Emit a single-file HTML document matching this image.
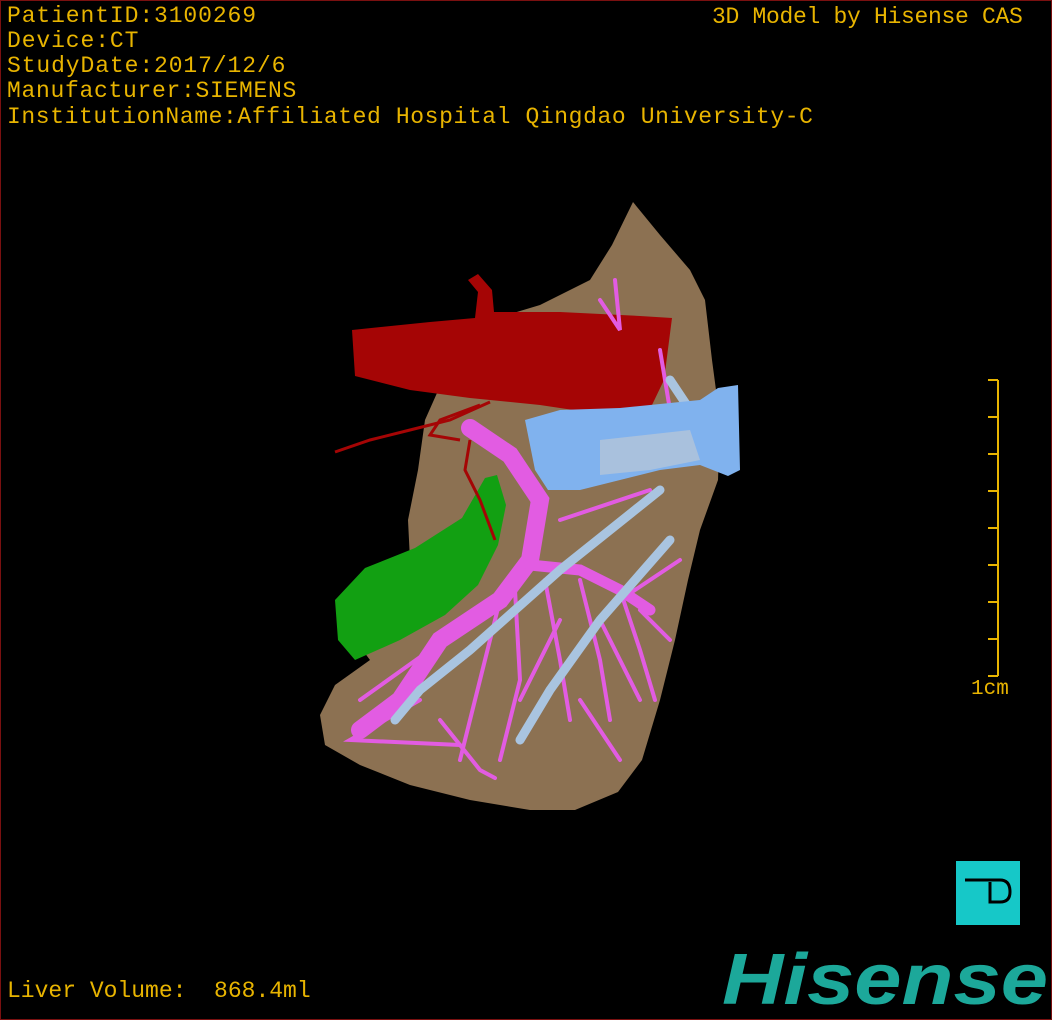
<!DOCTYPE html>
<html><head><style>
html,body{margin:0;padding:0;background:#000}
#f{position:relative;width:1050px;height:1018px;border:1px solid #7a1010;background:#000;overflow:hidden}
.t{position:absolute;left:6px;color:#e8b400;font-family:"Liberation Mono",monospace;font-size:23px;line-height:25px;white-space:pre}
</style></head><body><div id="f">
<div class="t" style="top:3px;letter-spacing:0.9px">PatientID:3100269</div>
<div class="t" style="top:28px;letter-spacing:0.9px">Device:CT</div>
<div class="t" style="top:53px;letter-spacing:0.9px">StudyDate:2017/12/6</div>
<div class="t" style="top:78px;letter-spacing:0.7px">Manufacturer:SIEMENS</div>
<div class="t" style="top:104px;letter-spacing:0.6px">InstitutionName:Affiliated Hospital Qingdao University-C</div>
<div class="t" style="left:711px;top:4px;letter-spacing:-0.3px">3D Model by Hisense CAS</div>
<div class="t" style="top:978px">Liver Volume:  868.4ml</div>
<div class="t" style="left:970px;top:676px;font-size:21px">1cm</div>
<svg width="1052" height="1020" style="position:absolute;left:-1px;top:-1px">
<g stroke="#e8b400" stroke-width="2">
<line x1="998" y1="380" x2="998" y2="676"/>
<line x1="988" y1="380" x2="998" y2="380"/><line x1="988" y1="417" x2="998" y2="417"/><line x1="988" y1="454" x2="998" y2="454"/><line x1="988" y1="491" x2="998" y2="491"/><line x1="988" y1="528" x2="998" y2="528"/><line x1="988" y1="565" x2="998" y2="565"/><line x1="988" y1="602" x2="998" y2="602"/><line x1="988" y1="639" x2="998" y2="639"/><line x1="988" y1="676" x2="998" y2="676"/>
</g>
<path d="M633,202 L660,235 L690,270 L705,300 L712,360 L720,420 L718,480 L700,530 L688,580 L675,640 L660,700 L642,760 L618,792 L575,810 L530,810 L470,800 L410,785 L360,765 L325,745 L320,715 L335,685 L370,660 L340,620 L345,595 L410,560 L408,520 L418,470 L425,420 L445,375 L490,320 L540,305 L590,280 L612,245 Z" fill="#8c7152"/>
<path d="M335,600 L365,568 L415,548 L462,518 L485,478 L497,475 L506,505 L498,545 L478,585 L445,615 L400,640 L355,660 L338,640 Z" fill="#12a012"/>
<path d="M352,330 L430,322 L475,318 L478,292 L468,280 L478,274 L492,290 L494,312 L560,312 L640,316 L672,318 L664,380 L652,405 L600,414 L540,405 L470,398 L410,390 L355,376 Z" fill="#a50505"/>
<g fill="none" stroke="#a50505" stroke-width="3"><path d="M490,402 L450,420 L410,430 L370,440 L335,452"/><path d="M480,405 L440,420 L430,435 L460,440"/><path d="M470,440 L465,470 L480,500 L495,540"/></g>
<g fill="none" stroke="#e25ce2" stroke-linecap="round">
<path d="M470,428 L510,455 L540,500 L530,560 L500,600 L440,640 L400,700 L360,730" stroke-width="18"/>
<path d="M530,565 L580,570 L620,590 L650,610" stroke-width="11"/>
<g stroke-width="4"><path d="M500,600 L480,680 L460,760"/><path d="M515,590 L520,680 L500,760"/><path d="M545,580 L560,660 L570,720"/><path d="M580,580 L600,660 L610,720"/><path d="M620,590 L640,650 L655,700"/><path d="M430,650 L360,700"/><path d="M420,700 L350,740 L460,745"/><path d="M440,720 L480,770 L495,778"/><path d="M560,520 L650,490"/><path d="M620,600 L680,560"/><path d="M600,300 L620,330 L615,280"/><path d="M660,350 L670,410"/><path d="M560,620 L520,700"/><path d="M600,620 L640,700"/><path d="M640,610 L670,640"/><path d="M580,700 L620,760"/></g>
</g>
<g fill="none" stroke="#a9c4e0" stroke-width="9" stroke-linecap="round"><path d="M660,490 L560,570 L470,650 L420,690 L395,720"/><path d="M670,540 L600,620 L550,690 L520,740"/><path d="M670,380 L690,410"/></g>
<path d="M525,420 L560,410 L620,408 L700,400 L718,388 L738,385 L740,470 L728,476 L700,465 L660,470 L620,480 L580,490 L548,490 L535,470 Z" fill="#80b2ee"/>
<path d="M600,440 L690,430 L700,460 L650,470 L600,475 Z" fill="#a9c1dd"/>
<rect x="956" y="861" width="64" height="64" fill="#16c8c8"/>
<path d="M965,880 H1000 Q1010,880 1010,892 Q1010,902 1000,902 H990 V882" fill="none" stroke="#000" stroke-width="3"/>
<text x="722" y="1004" font-family="Liberation Sans,sans-serif" font-weight="bold" font-style="italic" font-size="72" fill="#1ca89a" textLength="326" lengthAdjust="spacingAndGlyphs">Hisense</text>
</svg>
</div></body></html>
